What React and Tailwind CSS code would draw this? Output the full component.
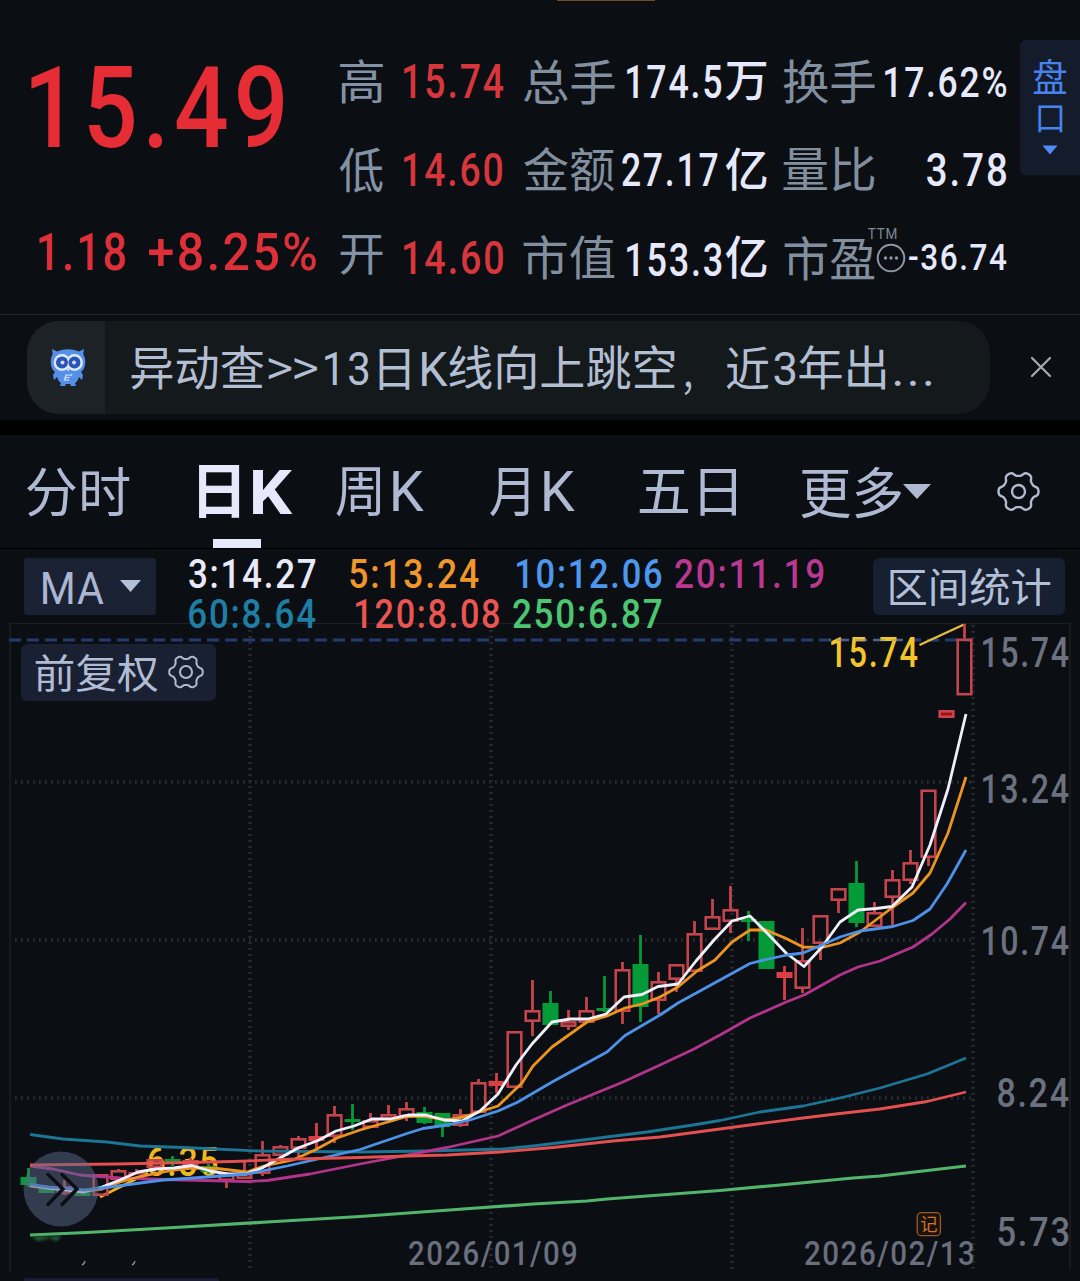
import React, { useMemo } from "react";
import clsx from "clsx";

const NUM = 'Roboto, "Noto Sans CJK SC", sans-serif';
const HAN = '"Noto Sans CJK SC", sans-serif';

let ctx = null;
/* Glyph bounds for a 100px font, taken at 1000px for sub-pixel precision. */
function measure(text, font, weight, spacing) {
  if (!ctx) ctx = document.createElement("canvas").getContext("2d");
  ctx.font = `${weight} 1000px ${font}`;
  const m = ctx.measureText(text);
  return {
    left: -m.actualBoundingBoxLeft / 10,
    width: (m.actualBoundingBoxRight + m.actualBoundingBoxLeft) / 10 + spacing * (text.length - 1),
    up: m.actualBoundingBoxAscent / 10,
    height: (m.actualBoundingBoxAscent + m.actualBoundingBoxDescent) / 10,
    asc: m.fontBoundingBoxAscent / 10,
    desc: m.fontBoundingBoxDescent / 10,
  };
}

function insets(text, han) {
  if (han) return [0.4, 0.4];
  return [/^[1M]/.test(text) ? 2 : 1, 0.7];
}

/* Text whose glyph bounds fill a w x h box. */
function Fit({ children, w, h, className, han = false, weight = han ? 400 : 500, spacing = han ? 0 : 5 }) {
  const font = han ? HAN : NUM;
  const style = useMemo(() => {
    const m = measure(children, font, weight, spacing);
    const [l, r] = insets(children, han);
    const sx = (w - l - r) / m.width;
    const sy = h / m.height;
    const base = (100 - (m.asc + m.desc)) / 2 + m.asc;
    const dx = l - m.left * sx;
    const dy = -(base - m.up) * sy;
    return {
      fontFamily: font,
      fontWeight: weight,
      letterSpacing: `${spacing}px`,
      transform: `translate(${dx}px, ${dy}px) scale(${sx}, ${sy})`,
    };
  }, [children, w, h, font, weight, spacing, han]);
  return (
    <span className={clsx("block shrink-0", className)} style={{ width: w, height: h }}>
      <span className="block h-[100px] w-0 origin-top-left text-[100px] leading-[100px] whitespace-pre" style={style}>
        {children}
      </span>
    </span>
  );
}

/* The same fitting for a label inside the chart drawing. */
function Label({ children, x, y, w, h, fill, han = false, weight = han ? 400 : 500, spacing = han ? 0 : 5 }) {
  const font = han ? HAN : NUM;
  const m = measure(children, font, weight, spacing);
  const [l, r] = insets(children, han);
  const sx = (w - l - r) / m.width;
  const sy = h / m.height;
  return (
    <text
      fill={fill}
      fontFamily={font}
      fontWeight={weight}
      fontSize="100"
      letterSpacing={spacing}
      transform={`translate(${x + l - m.left * sx} ${y + m.up * sy}) scale(${sx} ${sy})`}
    >
      {children}
    </text>
  );
}

const GEAR = (() => {
  const pts = [];
  for (let i = 0; i < 120; i++) {
    const t = (i / 120) * Math.PI * 2;
    const r = 17.8 + (2.2 * Math.tanh(1.6 * Math.cos(6 * t))) / Math.tanh(1.6);
    pts.push(`${(r * Math.cos(t)).toFixed(2)} ${(r * Math.sin(t)).toFixed(2)}`);
  }
  return `M${pts.join("L")}Z`;
})();

function Gear({ className, stroke = 2.4, inner = 6.5 }) {
  return (
    <svg viewBox="-21.5 -21.5 43 43" className={clsx("shrink-0", className)} fill="none" stroke="#b0bad3" strokeWidth={stroke} strokeLinejoin="round">
      <path d={GEAR} />
      <circle r={inner} />
    </svg>
  );
}

function Owl() {
  return (
    <svg viewBox="0 0 36 40" className="h-[40px] w-[36px]">
      <path d="M2 1 7 3.5Q18-1 29 3.5L34 1 33.300 6Q36 11 35 17Q34 22 31 24L33 27 32 32 29 29Q28 33 25 35L26 38H20.500V36H15.500V38H10L11 35Q8 33 7 29L4 32 3 27 5 24Q2 22 1 17Q0 11 2.700 6Z" fill="#5590e8" />
      <circle cx="12" cy="14.500" r="8.400" fill="#dfe9ff" />
      <circle cx="24.500" cy="14.500" r="8.400" fill="#dfe9ff" />
      <circle cx="12" cy="14.500" r="6" fill="#2b55b4" />
      <circle cx="24.500" cy="14.500" r="6" fill="#2b55b4" />
      <circle cx="12.500" cy="14.500" r="2" fill="#c8dcff" />
      <circle cx="24" cy="14.500" r="2" fill="#c8dcff" />
      <path d="m16.500 21 1.700 2.500 1.700-2.500Z" fill="#dbe6ff" />
      <path d="M20.500 27H16l-1.500 5H19M15.500 29.500H19.500M22 26l-1 2" stroke="#dce8ff" strokeWidth="1.200" fill="none" />
    </svg>
  );
}

function Quote() {
  return (
    <header className="flex h-[314px] w-full shrink-0 items-start">
      <div className="w-[339px] shrink-0 pt-[64px] pl-[29px] text-[#e62d35]">
        <Fit w={255} h={85}>15.49</Fit>
        <div className="mt-[83px] flex items-start pl-[8px] text-[#de3038]">
          <Fit w={89} h={39}>1.18</Fit>
          <Fit w={169} h={39} className="ml-[22px]">+8.25%</Fit>
        </div>
      </div>
      <div className="flex w-[165px] shrink-0 flex-col">
        <div className="flex h-[148px] items-start pt-[60px]">
          <Fit han w={44} h={44} className="text-[#8492a6]">高</Fit>
          <Fit w={102} h={35} className="mt-[4px] ml-[19px] text-[#d8363d]">15.74</Fit>
        </div>
        <div className="flex h-[88px] items-start">
          <Fit han w={44} h={45} className="text-[#8492a6]">低</Fit>
          <Fit w={101} h={35} className="mt-[4px] ml-[19px] text-[#d8363d]">14.60</Fit>
        </div>
        <div className="flex items-start">
          <Fit han w={43} h={40} className="ml-px text-[#8492a6]">开</Fit>
          <Fit w={102} h={35} className="mt-[4px] ml-[19px] text-[#d8363d]">14.60</Fit>
        </div>
      </div>
      <div className="ml-[19px] flex w-[244px] shrink-0 flex-col text-[#e6e8fb]">
        <div className="flex h-[148px] items-start pt-[60px]">
          <Fit han w={92} h={44} className="text-[#828f9f]">总手</Fit>
          <Fit w={97} h={34} className="mt-[5px] ml-[10px]">174.5</Fit>
          <Fit han weight={500} w={42} h={39} className="mt-[2px] ml-[3px]">万</Fit>
        </div>
        <div className="flex h-[88px] items-start">
          <Fit han w={92} h={44} className="text-[#828f9f]">金额</Fit>
          <Fit w={97} h={34} className="mt-[5px] ml-[6px]">27.17</Fit>
          <Fit han weight={500} w={42} h={43} className="ml-[7px]">亿</Fit>
        </div>
        <div className="flex items-start">
          <Fit han w={92} h={44} className="text-[#828f9f]">市值</Fit>
          <Fit w={97} h={35} className="mt-[6px] ml-[10px]">153.3</Fit>
          <Fit han weight={500} w={42} h={43} className="ml-[3px]">亿</Fit>
        </div>
      </div>
      <div className="ml-[16px] flex w-[224px] shrink-0 flex-col text-[#e6e8fb]">
        <div className="flex h-[147px] items-start justify-between pt-[60px]">
          <Fit han w={92} h={44} className="text-[#828f9f]">换手</Fit>
          <Fit w={124} h={32} className="mt-[6px]">17.62%</Fit>
        </div>
        <div className="flex h-[81px] items-start justify-between">
          <Fit han w={92} h={44} className="text-[#828f9f]">量比</Fit>
          <Fit w={81} h={35} className="mt-[5px]">3.78</Fit>
        </div>
        <div className="flex items-start">
          <Fit han w={91} h={44} className="mt-[8px] ml-px text-[#828f9f]">市盈</Fit>
          <div className="-ml-[8px] flex flex-col">
            <Fit w={30} h={11} weight={400} className="text-[#7f8996]">TTM</Fit>
            <svg viewBox="0 0 30 30" className="mt-[4px] ml-[9px] size-[30px]" fill="none" stroke="#8e97a5" strokeWidth="2">
              <circle cx="15" cy="15" r="13.300" />
              <path d="M9.500 15h.01M15 15h.01M20.500 15h.01" strokeWidth="3.400" strokeLinecap="round" />
            </svg>
          </div>
          <Fit w={99} h={27} className="mt-[16px] ml-[2px]">-36.74</Fit>
        </div>
      </div>
      <button className="mt-[40px] ml-[13px] flex h-[135px] flex-1 flex-col items-start rounded-l-[6px] bg-[#141c2c] pt-[19px] pl-[13px] text-[#4783ec]">
        <Fit han w={34} h={35}>盘</Fit>
        <Fit han w={25} h={27} className="mt-[11px] ml-[5px]">口</Fit>
        <svg viewBox="0 0 16 10" className="mt-[13px] ml-[9px] h-[10px] w-[16px]" fill="#4f8df5"><path d="M.5.5h15L8 9.500Z" /></svg>
      </button>
    </header>
  );
}

function Notice() {
  return (
    <section className="flex h-[106px] shrink-0 items-start border-t border-[#24282c] pt-[6px] pl-[27px]">
      <div className="flex h-[93px] w-[963px] overflow-hidden rounded-[32px] bg-[#14191c]">
        <div className="flex w-[78px] items-center justify-center bg-[#1d2227] pl-[3px]">
          <Owl />
        </div>
        <div className="flex items-start pt-[25px] pl-[26px] text-[#b3bed2]">
          <Fit han w={133} h={44}>异动查</Fit>
          <Fit han w={50} h={22} className="mt-[12px] ml-[4px]">&gt;&gt;</Fit>
          <Fit w={46} h={35} weight={400} className="mt-[5px] ml-[5px]">13</Fit>
          <Fit han w={31} h={41} className="mt-[3px] ml-[10px]">日</Fit>
          <Fit w={28} h={34} weight={400} className="mt-[6px] ml-[11px]">K</Fit>
          <Fit han w={226} h={44}>线向上跳空</Fit>
          <Fit han w={8} h={14} className="mt-[34px] ml-[9px]">，</Fit>
          <Fit han w={43} h={43} className="mt-px ml-[34px]">近</Fit>
          <Fit w={23} h={35} weight={400} className="mt-[5px] ml-[4px]">3</Fit>
          <Fit han w={87} h={44} className="ml-[3px]">年出</Fit>
          <Fit han w={38} h={6} spacing={8} className="mt-[35px] ml-[8px]">...</Fit>
        </div>
      </div>
      <svg viewBox="0 0 22 22" className="mt-[35px] ml-[40px] size-[22px]" stroke="#a9acb2" strokeWidth="2.200" strokeLinecap="round">
        <path d="m2 2 18 18M20 2 2 20" />
      </svg>
    </section>
  );
}

function Tabs() {
  return (
    <nav className="flex h-[114px] shrink-0 items-start border-b border-black pt-[30px] pl-[26px] text-[#afbad2]">
      <Fit han w={104} h={50} className="mt-[2px]">分时</Fit>
      <div className="ml-[67px] flex w-[96px] shrink-0 flex-col items-start text-[#e6e8fc]">
        <div className="flex items-start">
          <Fit han weight={700} w={42} h={53} className="ml-px">日</Fit>
          <Fit weight={700} w={42} h={44} className="mt-[5px] ml-[12px]">K</Fit>
        </div>
        <div className="mt-[21px] ml-[16px] h-[9px] w-[48px] bg-[#e6e8fc]" />
      </div>
      <Fit han w={45} h={49} className="mt-[2px] ml-[43px]">周</Fit>
      <Fit weight={400} w={33} h={40} className="mt-[6px] ml-[11px]">K</Fit>
      <Fit han w={40} h={49} className="mt-[2px] ml-[64px]">月</Fit>
      <Fit weight={400} w={33} h={40} className="mt-[6px] ml-[14px]">K</Fit>
      <Fit han w={98} h={47} className="mt-[4px] ml-[63px]">五日</Fit>
      <Fit han w={101} h={51} className="mt-[2px] ml-[64px]">更多</Fit>
      <svg viewBox="0 0 28 15" className="mt-[19px] ml-px h-[15px] w-[28px] shrink-0" fill="#afbad2"><path d="M0 0h28L14 15Z" /></svg>
      <Gear className="mt-[5px] ml-[66px] size-[43px]" />
    </nav>
  );
}

function Indicators() {
  return (
    <section className="relative z-10 flex h-[74px] shrink-0 items-start pt-[9px] pl-[24px]">
      <button className="flex h-[57px] w-[132px] shrink-0 items-start rounded-[3px] bg-[#1a2133] pt-[14px] pl-[17px] text-[#aab6d2]">
        <Fit w={63} h={32} weight={400} spacing={2}>MA</Fit>
        <svg viewBox="0 0 21 12" className="mt-[8px] ml-[16px] h-[12px] w-[21px]" fill="#b4bfd8"><path d="M0 0h21L10.500 12Z" /></svg>
      </button>
      <div className="ml-[32px] flex w-[685px] shrink-0 flex-col">
        <div className="flex h-[40px] items-start">
          <Fit w={128} h={31} className="text-[#e8eafa]">3:14.27</Fit>
          <Fit w={130} h={31} className="ml-[33px] text-[#f0962a]">5:13.24</Fit>
          <Fit w={147} h={31} className="ml-[36px] text-[#4c98ee]">10:12.06</Fit>
          <Fit w={150} h={31} className="ml-[12px] text-[#b93890]">20:11.19</Fit>
        </div>
        <div className="flex items-start">
          <Fit w={128} h={31} className="text-[#1d7fa3]">60:8.64</Fit>
          <Fit w={146} h={31} className="ml-[38px] text-[#e85552]">120:8.08</Fit>
          <Fit w={150} h={31} className="ml-[12px] text-[#4cc670]">250:6.87</Fit>
        </div>
      </div>
      <button className="flex h-[57px] w-[192px] shrink-0 items-start rounded-[6px] bg-[#162030] pt-[10px] pl-[17px] text-[#b3bfd8]">
        <Fit han w={161} h={38}>区间统计</Fit>
      </button>
    </section>
  );
}

/* kind, body top, body bottom, high, low */
const CANDLES = [
  ["g", 1177, 1185, 1168, 1187], ["g", 1187, 1193, 1186, 1193], ["r", 1186, 1194, 1180, 1195], ["g", 1190, 1196, 1190, 1196],
  ["r", 1174, 1196, 1174, 1196], ["r", 1170, 1180, 1169, 1181], ["r", 1172, 1180, 1169, 1180], ["r", 1159, 1168, 1159, 1172],
  ["g", 1159, 1164, 1156, 1166], ["r", 1160, 1166, 1158, 1168], ["g", 1166, 1172, 1164, 1174], ["r", 1174, 1181, 1172, 1188],
  ["r", 1173, 1179, 1160, 1179], ["r", 1154, 1174, 1141, 1176], ["r", 1146, 1156, 1145, 1160], ["r", 1138, 1149, 1136, 1158],
  ["f", 1136, 1141, 1123, 1150], ["r", 1114, 1137, 1106, 1143], ["g", 1119, 1122, 1104, 1130], ["r", 1120, 1128, 1113, 1128],
  ["r", 1114, 1120, 1105, 1120], ["r", 1108, 1117, 1102, 1121], ["g", 1112, 1123, 1107, 1124], ["g", 1113, 1127, 1113, 1137],
  ["r", 1114, 1126, 1109, 1127], ["r", 1082, 1113, 1079, 1113], ["f", 1081, 1086, 1073, 1093], ["r", 1031, 1088, 1031, 1088],
  ["r", 1010, 1022, 980, 1036], ["g", 1003, 1025, 991, 1025], ["r", 1021, 1027, 1010, 1030], ["r", 1010, 1023, 997, 1023],
  ["g", 1008, 1011, 976, 1012], ["r", 969, 1012, 962, 1024], ["g", 964, 1007, 935, 1022], ["r", 981, 1001, 972, 1014],
  ["r", 964, 980, 964, 992], ["r", 933, 972, 921, 972], ["r", 916, 930, 899, 930], ["r", 909, 922, 886, 933],
  ["g", 919, 922, 911, 941], ["g", 921, 969, 921, 969], ["f", 972, 978, 966, 1000], ["r", 960, 989, 928, 993],
  ["r", 915, 944, 915, 960], ["r", 888, 901, 888, 913], ["g", 883, 923, 861, 927], ["r", 912, 927, 902, 927],
  ["r", 879, 898, 870, 925], ["r", 862, 881, 850, 884], ["r", 789.5, 858, 789.5, 866], ["s", 710, 718, 710, 718],
  ["r", 638.5, 695.500, 624, 695.500],
];

const LINES = [
  ["#53b56c", 3.2, "30,1235 87,1232.5 183,1227 267,1222 360,1216.5 463,1209 533,1204 587,1201 607,1199 720,1190.5 780,1185 853,1178 880,1176 966,1166"],
  ["#1c7594", 2.8, "30,1134.500 63,1139 107,1142 140,1146 183,1147.5 260,1151 360,1152 427,1151 503,1149 533,1146 587,1139.500 647,1132 693,1125 720,1120.5 760,1112 803,1106 840,1098 880,1088 927,1074 966,1058"],
  ["#b2348b", 2.8, "30,1166 53,1169 80,1175 120,1178 163,1179.500 247,1181.5 267,1180.500 310,1174 360,1164 407,1155 447,1147.5 498,1136 533,1120 567,1105 623,1082 660,1065 693,1049.5 720,1035 750,1018 785,1002.500 805,994.500 840,975 858,967 880,961 913,947 932,934 950,919 966,902.5"],
  ["#ec9420", 2.8, "30,1186 48,1188 84,1191 102,1189 120,1182 138,1177 174,1170 192,1168 217,1168.5 247,1172 264,1166 293,1160 315,1150 337,1138 360,1130 407,1116.5 423,1116 447,1120 463,1117 498,1106 522,1083 533,1066 552,1047 587,1022 607,1016 625,1008 642,1004 660,997 678,987 697,971 715,960 732,942 750,930 766,930 785,938 803,947 822,947.5 840,943 860,932 893,907 913,893 930,873 948,833 966,777"],
  ["#f0f0fc", 2.8, "30,1185 48,1188 84,1192 102,1187 120,1180 138,1172 156,1169 174,1168 192,1165.5 210,1171 228,1174 246,1174 262,1168 280,1158 298,1148 318,1140.5 336,1131 354,1126 372,1119 390,1119 408,1115 426,1115 444,1120 462,1121 480,1111 498,1094 516,1065 532,1044 552,1022 570,1019 588,1019 606,1014 624,997 642,994.5 658,986.5 678,984 696,961 714,940 732,921 750,916 768,934 786,953 804,966.5 822,947 840,922 858,910 876,908.5 892,906.5 912,887 930,845 948,789 966,714"],
  ["#4c92e8", 2.8, "30,1184.500 48,1187 85,1190 110,1187 163,1180 200,1177.5 247,1174 287,1166 360,1149.5 407,1133.5 423,1128.5 447,1125 470,1120 498,1111 517,1102.500 553,1081.500 607,1052 625,1035.500 660,1015 678,1003 720,980 750,963.500 766,959.500 787,955 803,953 822,945 840,937 860,931 893,926.5 913,920.5 930,909 947,884 966,850"],
  ["#e4504f", 2.8, "30,1165 117,1164 233,1161.500 297,1159 360,1157.5 407,1156 447,1155 500,1152 553,1147.5 613,1141 660,1137 720,1129 757,1124 803,1118 840,1113.5 880,1109 927,1101.500 966,1092"],
];

const INK = { g: "#049a38", f: "#d93f44", r: "#c4444b", s: "#c9444c" };

function Candle({ i, kind, top, bottom, high, low }) {
  const x = 28.5 + 18 * i;
  const c = INK[kind];
  const hollow = kind === "r" || kind === "s";
  return (
    <g>
      {high < top && <rect x={x - 1.4} y={high} width="2.800" height={top - high} fill={c} />}
      {low > bottom && <rect x={x - 1.4} y={bottom} width="2.800" height={low - bottom} fill={c} />}
      {hollow ? (
        <rect
          x={x - 6.8}
          y={top + 1.3}
          width="13.600"
          height={Math.max(bottom - top - 2.6, 1)}
          fill={kind === "s" ? "#a01019" : "none"}
          stroke={c}
          strokeWidth="2.600"
        />
      ) : (
        <rect x={x - 8} y={top} width="16" height={bottom - top} fill={c} />
      )}
    </g>
  );
}

function Chart() {
  return (
    <section className="relative h-[658px] shrink-0">
      <svg viewBox="0 623 1080 658" className="block h-[658px] w-[1080px]">
        <defs>
          <filter id="soft" x="-20%" y="-80%" width="140%" height="260%">
            <feGaussianBlur stdDeviation="1.5" />
          </filter>
        </defs>
        <g stroke="#1d2025" strokeWidth="1.500" fill="none">
          <path d="M10 1272V623.500H1070V1270" />
        </g>
        <g stroke="#2a2c32" strokeWidth="3.600" strokeDasharray="1.800 4.200">
          <path d="M15 782H973M15 940H973M15 1098H973" />
          <path d="M250 630V1269M491 630V1269M732 625V1269M973 625V1269" />
        </g>
        <path d="M9 640H973" stroke="#263a72" strokeWidth="3" strokeDasharray="12 6" />

        <Label x={981} y={637} w={88} h={31} fill="#6c717f">15.74</Label>
        <Label x={981} y={773} w={88} h={31} fill="#6c717f">13.24</Label>
        <Label x={981} y={925} w={88} h={31} fill="#6c717f">10.74</Label>
        <Label x={997} y={1077} w={72} h={31} fill="#6c717f">8.24</Label>
        <Label x={997} y={1216} w={72} h={31} fill="#6c717f">5.73</Label>
        <Label x={408} y={1240} w={169} h={27} fill="#6a6f7d">2026/01/09</Label>
        <Label x={804} y={1240} w={170} h={27} fill="#6a6f7d">2026/02/13</Label>

        <Label x={829} y={637} w={89} h={31} fill="#f3c52b">15.74</Label>
        <path d="M919.500 645 964 624.500" stroke="#e5bd3c" strokeWidth="2.400" />
        <path d="M829 640H905" stroke="#8a9090" strokeWidth="2" strokeDasharray="12 6" strokeDashoffset="10" opacity=".45" />

        <Label x={147} y={1147} w={71} h={30} fill="#f0b81e">6.35</Label>
        <path d="M100 1197 148 1173" stroke="#eeb21e" strokeWidth="2.800" />
        {CANDLES.map(([kind, top, bottom, high, low], i) => (
          <Candle key={i} i={i} kind={kind} top={top} bottom={bottom} high={high} low={low} />
        ))}
        {LINES.map(([color, width, points]) => (
          <polyline key={color} points={points} fill="none" stroke={color} strokeWidth={width} strokeLinejoin="round" />
        ))}
        <path d="M31 1236.500H62L56 1241 50 1238 38 1241Z" fill="#2e7a45" filter="url(#soft)" opacity=".8" />

        <circle cx="61" cy="1189" r="37.500" fill="#5b6a8c" opacity=".5" />
        <path d="m48 1174.500 15 14.500-15 15.500M62 1174.500 77 1189l-15 15.500" fill="none" stroke="#0b0e15" strokeWidth="3.400" strokeLinecap="round" />

        <rect x="917.200" y="1212.700" width="23.200" height="23" rx="4" fill="#1a120e" stroke="#9a5a28" strokeWidth="1.300" />
        <Label han x={920.5} y={1216.5} w={17} h={16} fill="#d0742a">记</Label>

        <path d="M82 1265q2.500-1 3-4M132 1265q2.500-1 3-4" stroke="#8d929c" strokeWidth="1.500" fill="none" />
        <path d="M24 1281v-1.500q0-1.500 3-1.500H216q3 0 3 1.500V1281Z" fill="#1a1d31" />
      </svg>
      <button className="absolute top-[21px] left-[21px] flex h-[57px] w-[195px] items-start rounded-[6px] bg-[#182031] pt-[10px] pl-[14px] text-[#b0bcd4]">
        <Fit han w={123} h={38}>前复权</Fit>
        <Gear className="ml-[10px] size-[36px]" stroke={2.4} inner={7.2} />
      </button>
    </section>
  );
}

export default function App() {
  return (
    <main className="relative flex h-[1281px] w-[1080px] flex-col overflow-hidden bg-[#0b0e13]">
      <div className="absolute top-0 left-[557px] h-px w-[98px] bg-[#7a4b22]" />
      <Quote />
      <Notice />
      <div className="h-[15px] shrink-0 bg-black" />
      <Tabs />
      <Indicators />
      <Chart />
    </main>
  );
}
